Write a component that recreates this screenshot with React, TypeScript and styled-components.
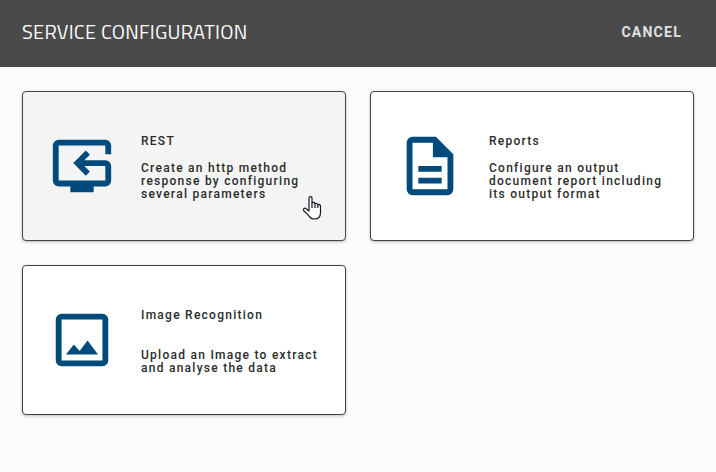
import React from "react";
import styled, { createGlobalStyle } from "styled-components";

const GlobalStyle = createGlobalStyle`
  *, *::before, *::after { box-sizing: border-box; }
  body {
    margin: 0;
    background: #fbfbfb;
    font-family: Roboto, "Liberation Sans", sans-serif;
  }
`;

const Header = styled.header`
  display: flex;
  align-items: center;
  justify-content: space-between;
  padding: 16px 22px 20px;
  background: #4a4a4a;
`;

const Title = styled.h1`
  margin: 0;
  color: #fafafa;
  font-family: "Titillium Web", Roboto, "Liberation Sans", sans-serif;
  font-size: 20px;
  font-weight: 500;
  line-height: 31px;
  letter-spacing: 0.0125em;
`;

const CancelButton = styled.button`
  padding: 1px 12px 0;
  border: 0;
  background: transparent;
  color: #e0e0e0;
  font: 700 14px/30px Roboto, "Liberation Sans", sans-serif;
  letter-spacing: 0.09em;
  cursor: pointer;
`;

const CardGrid = styled.main`
  display: grid;
  grid-template-columns: repeat(2, minmax(0, 1fr));
  gap: 24px;
  padding: 24px 22px;
`;

const Card = styled.button<{ $hovered?: boolean }>`
  position: relative;
  display: flex;
  align-items: center;
  gap: 24px;
  min-height: 150px;
  padding: 24px;
  border: 1px solid #444;
  border-radius: 4px;
  background: ${({ $hovered }) => ($hovered ? "#f4f4f4" : "#fff")};
  box-shadow: 0 1px 3px rgba(0, 0, 0, 0.25);
  color: #2b2b2b;
  font: 500 12px/13px Roboto, "Liberation Sans", sans-serif;
  letter-spacing: 0.105em;
  text-align: left;
  cursor: pointer;
`;

const CardIcon = styled.svg`
  flex: none;
  width: 70px;
  height: 70px;
  fill: #004b7c;
`;

const CardText = styled.span`
  display: flex;
  flex: 1;
  flex-direction: column;
  justify-content: space-between;
  min-height: 70px;
  padding-top: 4px;
`;

const Pointer = styled.svg`
  position: absolute;
  right: 23px;
  bottom: 19px;
  width: 20px;
  height: 26px;
  pointer-events: none;
`;

const services = [
  {
    name: "REST",
    description: "Create an http method response by configuring several parameters",
    icon: "M4 3h16a2 2 0 0 1 2 2v3h-2V5H4v12h16v-5h-7.2l1.9 1.9-1.4 1.4L9 11l4.3-4.3 1.4 1.4L12.8 10H20a2 2 0 0 1 2 2v5a2 2 0 0 1-2 2h-4v2H8v-2H4a2 2 0 0 1-2-2V5a2 2 0 0 1 2-2z",
    hovered: true,
  },
  {
    name: "Reports",
    description: "Configure an output document report including its output format",
    icon: "M6 2h8l6 6v12a2 2 0 0 1-2 2H6a2 2 0 0 1-2-2V4a2 2 0 0 1 2-2zM6 4v16h12V9h-5V4zM8 12h8v2H8zM8 16h8v2H8z",
  },
  {
    name: "Image Recognition",
    description: "Upload an Image to extract and analyse the data",
    icon: "M5 3h14a2 2 0 0 1 2 2v14a2 2 0 0 1-2 2H5a2 2 0 0 1-2-2V5a2 2 0 0 1 2-2zM5 5v14h14V5zM6.5 17l2.700-3.500 2 2.300 2.700-3.600 3.600 4.800z",
  },
];

const HandPointer = () => (
  <Pointer viewBox="0 0 20 26" aria-hidden="true">
    <path
      d="M7 16V3.200c0-2.200 3-2.200 3 0V8c.8-1 2.700-.8 3 .8.900-.8 2.600-.4 2.800 1 .900-.7 2.700-.2 2.700 1.500v6.200c0 4-2.400 6.500-6 6.500-3.200 0-4.700-1.400-6.200-3.900L1.600 15.500c-.9-1.900 1.100-3 2.600-1.700z"
      fill="#fff"
      stroke="#15152a"
      strokeWidth="1.2"
      strokeLinejoin="round"
    />
    <path d="M10 8v5M13 8.800V13M15.800 9.800V13" fill="none" stroke="#15152a" strokeWidth="1.2" />
  </Pointer>
);

export default function App() {
  return (
    <>
      <GlobalStyle />
      <Header>
        <Title>SERVICE CONFIGURATION</Title>
        <CancelButton type="button">CANCEL</CancelButton>
      </Header>
      <CardGrid>
        {services.map(({ name, description, icon, hovered }) => (
          <Card key={name} type="button" $hovered={hovered}>
            <CardIcon viewBox="0 0 24 24" aria-hidden="true">
              <path d={icon} fillRule="evenodd" />
            </CardIcon>
            <CardText>
              <span>{name}</span>
              <span>{description}</span>
            </CardText>
            {hovered && <HandPointer />}
          </Card>
        ))}
      </CardGrid>
    </>
  );
}
